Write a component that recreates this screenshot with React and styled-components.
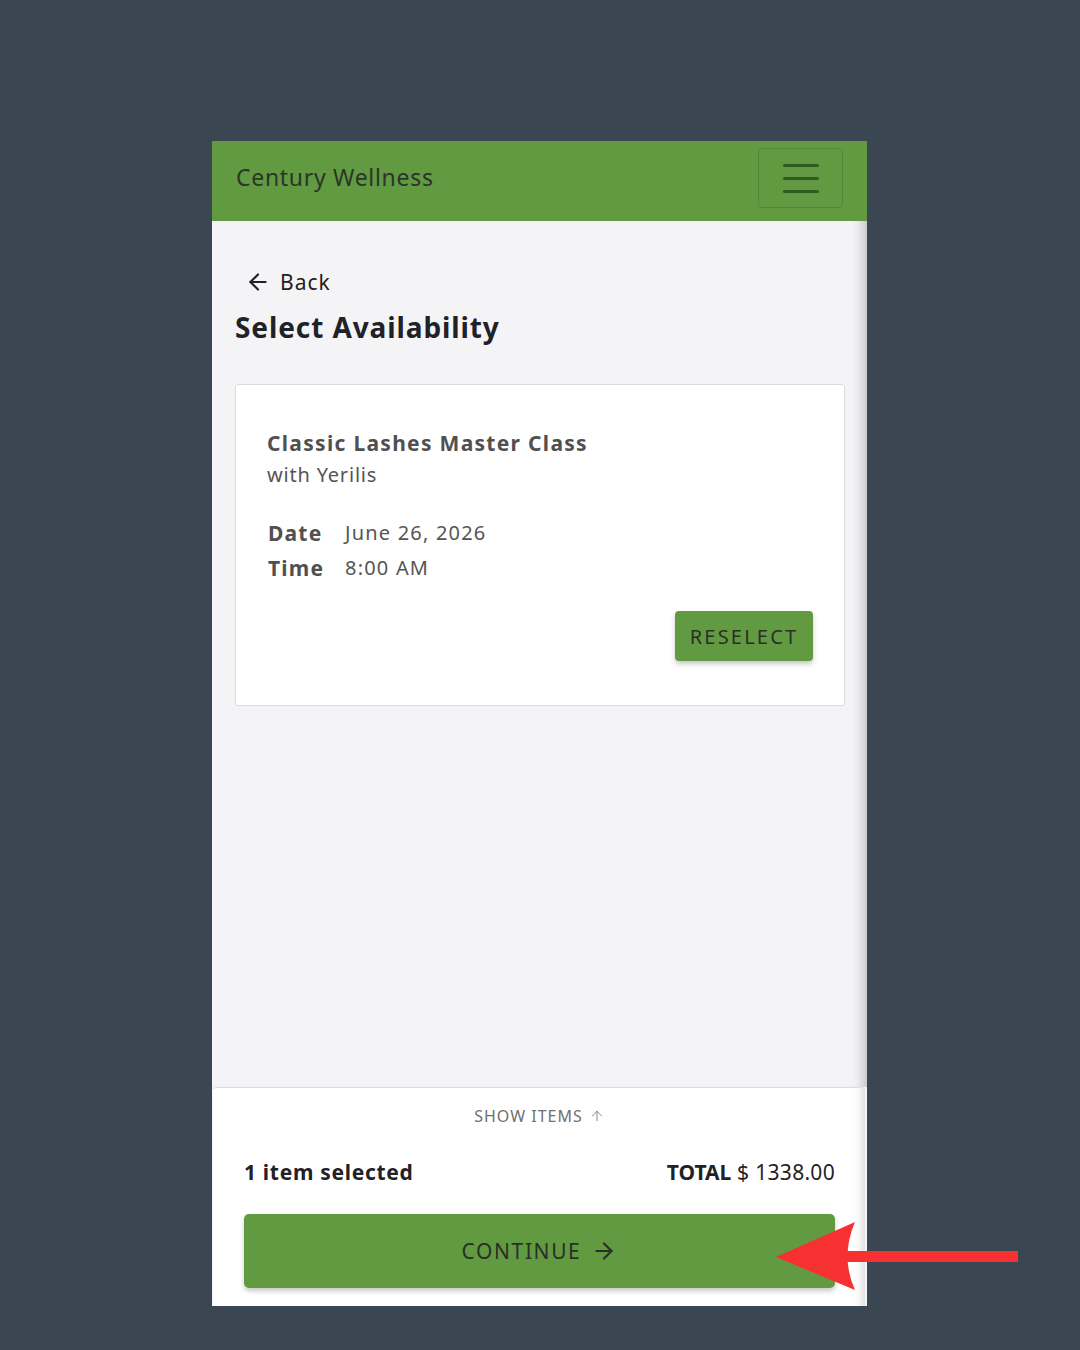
import styled, { createGlobalStyle } from "styled-components";
import { ArrowLeft, ArrowRight, ArrowUp } from "lucide-react";

const GlobalStyle = createGlobalStyle`
  html, body {
    margin: 0;
    padding: 0;
    background: #3a4651;
  }
  body {
    font-family: "Noto Sans", "Open Sans", sans-serif;
  }
  * { box-sizing: border-box; }
`

const Page = styled.div`
  position: relative;
  width: 1080px;
  height: 1350px;
  padding-top: 141px;
`

const Phone = styled.div`
  width: 655px;
  height: 1165px;
  margin-left: 212px;
  display: flex;
  flex-direction: column;
  background: #f4f4f6;
  overflow: hidden;
`

const Header = styled.header`
  height: 80px;
  flex-shrink: 0;
  background: #629a42;
  display: flex;
  align-items: center;
  justify-content: space-between;
  padding: 0 24px 8px 24px;
`

const Brand = styled.span`
  font-size: 23px;
  color: #2b3528;
  letter-spacing: 0.7px;
`

const Burger = styled.button`
  width: 85px;
  height: 60px;
  margin-top: 2px;
  border: 1px solid rgba(40, 80, 25, 0.25);
  border-radius: 4px;
  background: transparent;
  display: flex;
  flex-direction: column;
  justify-content: center;
  align-items: center;
  gap: 10px;

  span {
    display: block;
    width: 36px;
    height: 3px;
    border-radius: 2px;
    background: #2f5a22;
  }
`

const Main = styled.main`
  flex: 1;
  display: flex;
  flex-direction: column;
  padding: 48px 23px 0 23px;
  box-shadow: inset -14px 0 12px -10px rgba(0, 0, 0, 0.22);
`

const BackLink = styled.a`
  display: flex;
  align-items: center;
  gap: 9px;
  margin-left: 10px;
  font-size: 21px;
  letter-spacing: 1px;
  color: #222;
  height: 26px;
`

const Title = styled.h1`
  margin: 14px 0 0 0;
  font-size: 28px;
  font-weight: 700;
  letter-spacing: 0.9px;
  color: #1f2226;
  line-height: 36px;
`

const Card = styled.section`
  margin-top: 39px;
  width: 610px;
  background: #fff;
  border: 1px solid #dcdcde;
  border-radius: 3px;
  padding: 43px 31px 44px 31px;
  display: flex;
  flex-direction: column;
`

const ClassName = styled.h2`
  margin: 0;
  font-size: 21px;
  font-weight: 700;
  letter-spacing: 1.3px;
  color: #505050;
  line-height: 30px;
`

const Teacher = styled.p`
  margin: 2px 0 0 0;
  font-size: 20px;
  letter-spacing: 0.8px;
  color: #555;
  line-height: 30px;
`

const Details = styled.dl`
  margin: 28px 0 0 1px;
  display: grid;
  grid-template-columns: 77px auto;
  row-gap: 5px;
  font-size: 20px;
  line-height: 30px;
`

const Label = styled.dt`
  font-weight: 700;
  font-size: 21px;
  letter-spacing: 1.2px;
  color: #505050;
`

const Value = styled.dd`
  margin: 0;
  letter-spacing: 1.2px;
  color: #555;
`

const Actions = styled.div`
  display: flex;
  justify-content: flex-end;
  margin-top: 28px;
`

const GreenButton = styled.button`
  background: #629a42;
  border: none;
  border-radius: ${p => p.$radius || 4}px;
  color: #2a2f27;
  font-family: inherit;
  font-size: ${p => p.$size || 20}px;
  letter-spacing: ${p => p.$spacing || 2}px;
  box-shadow: 0 3px 5px rgba(0, 0, 0, 0.22);
  display: flex;
  align-items: center;
  justify-content: center;
  gap: 10px;
`

const Reselect = styled(GreenButton)`
  width: 138px;
  height: 50px;
`

const Footer = styled.footer`
  flex-shrink: 0;
  background: #fff;
  border-top: 1px solid #dcdcde;
  border-radius: 4px 4px 0 0;
  margin: 0 2px 0 1px;
  padding: 17px 30px 18px 31px;
  display: flex;
  flex-direction: column;
  box-shadow: inset -12px 0 10px -10px rgba(0, 0, 0, 0.18);
`

const ShowItems = styled.div`
  display: flex;
  justify-content: center;
  align-items: center;
  gap: 6px;
  font-size: 16px;
  color: #707070;
  letter-spacing: 1px;
`

const Summary = styled.div`
  margin-top: 31px;
  display: flex;
  justify-content: space-between;
  align-items: center;
  font-size: 21px;
  color: #1f2226;
`

const Bold = styled.strong`
  font-weight: 700;
  letter-spacing: ${p => p.$spacing || 0}px;
`

const Amount = styled.span`
  letter-spacing: 0.3px;
`

const Continue = styled(GreenButton)`
  margin-top: 28px;
  width: 591px;
  height: 74px;
`

const Pointer = styled.svg`
  position: absolute;
  left: 770px;
  top: 1218px;
`

export default function App() {
  return (
    <Page>
      <GlobalStyle />
      <Phone>
        <Header>
          <Brand>Century Wellness</Brand>
          <Burger>
            <span />
            <span />
            <span />
          </Burger>
        </Header>
        <Main>
          <BackLink>
            <ArrowLeft size={26} strokeWidth={2} color="#222" />
            Back
          </BackLink>
          <Title>Select Availability</Title>
          <Card>
            <ClassName>Classic Lashes Master Class</ClassName>
            <Teacher>with Yerilis</Teacher>
            <Details>
              <Label>Date</Label>
              <Value>June 26, 2026</Value>
              <Label>Time</Label>
              <Value>8:00 AM</Value>
            </Details>
            <Actions>
              <Reselect $spacing={2.2}>RESELECT</Reselect>
            </Actions>
          </Card>
        </Main>
        <Footer>
          <ShowItems>
            SHOW ITEMS
            <ArrowUp size={16} strokeWidth={1.2} color="#707070" />
          </ShowItems>
          <Summary>
            <Bold $spacing={0.7}>1 item selected</Bold>
            <Amount>
              <Bold>TOTAL</Bold> $ 1338.00
            </Amount>
          </Summary>
          <Continue $size={21} $radius={5} $spacing={1.6}>
            CONTINUE
            <ArrowRight size={26} strokeWidth={2} color="#2a2f27" />
          </Continue>
        </Footer>
      </Phone>
      <Pointer width="252" height="76" viewBox="0 0 252 76">
        <path d="M6 39 L85 4 Q70 39 85 72 Z" fill="#f73131" />
        <rect x="76" y="33" width="172" height="11" fill="#f73131" />
      </Pointer>
    </Page>
  );
}
